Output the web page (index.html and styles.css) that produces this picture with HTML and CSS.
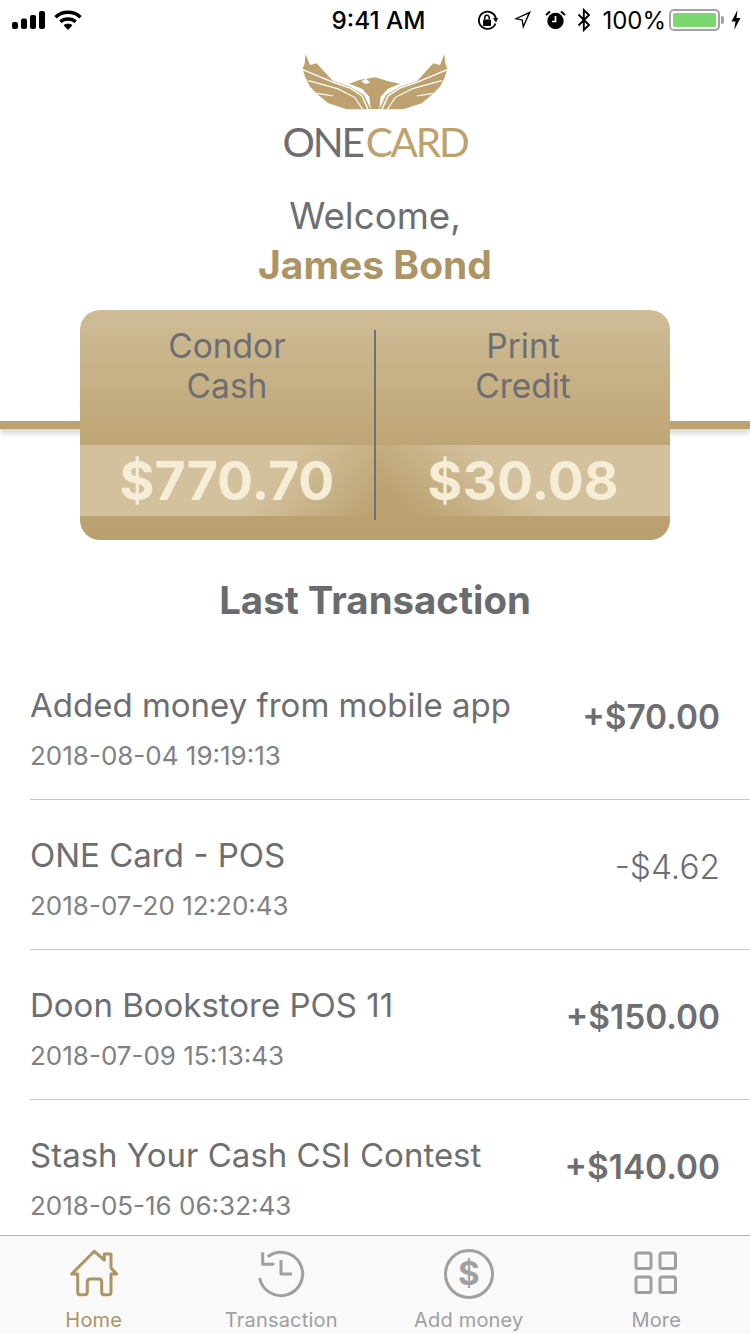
FILE: index.html
```html
<!DOCTYPE html>
<html lang="en">
<head>
<meta charset="utf-8">
<title>ONE Card</title>
<link rel="stylesheet" href="styles.css">
</head>
<body>
<div class="app">
  <header class="status">
    <div class="status-left">
      <svg class="i-signal" width="34" height="18" viewBox="0 0 34 18"><rect x="0" y="11" width="6" height="7" rx="2"/><rect x="9" y="7.5" width="6" height="10.5" rx="2"/><rect x="18" y="4" width="6" height="14" rx="2"/><rect x="27" y="0" width="6" height="18" rx="2"/></svg>
      <svg class="i-wifi" width="28" height="20" viewBox="0 0 28 20"><path d="M1.5 7.2 C8.5 0.6 19.5 0.6 26.5 7.2" fill="none" stroke="#000" stroke-width="3.4"/><path d="M6.3 11.8 C10.6 8 17.4 8 21.7 11.8" fill="none" stroke="#000" stroke-width="3.4"/><path d="M14 20 L9.6 15.2 C12 13.4 16 13.4 18.4 15.2 Z"/></svg>
    </div>
    <div class="time">9:41 AM</div>
    <div class="status-right">
      <svg class="gap-lock" width="21" height="21" viewBox="0 0 21 21"><path d="M18.5 13.5 A8.6 8.6 0 1 1 19 9" fill="none" stroke="#000" stroke-width="1.8"/><path d="M16 8 L21 8 L19 12.5 Z"/><rect x="6" y="9.5" width="8" height="6.5" rx="1"/><path d="M7.8 9.5 V7.5 a2.2 2.2 0 0 1 4.4 0 V9.5" fill="none" stroke="#000" stroke-width="1.5"/></svg>
      <svg class="gap-arrow" width="19" height="20" viewBox="0 0 19 20"><path d="M18 1 L10 19 L8.6 10.4 L1 9 Z M15 4 L4.8 8.6 L9.8 9.4 L10.6 14.6 Z" fill-rule="evenodd"/></svg>
      <svg width="21" height="20" viewBox="0 0 21 20"><circle cx="10.5" cy="11" r="8.2"/><path d="M10.5 6 V11.5 H7" fill="none" stroke="#fff" stroke-width="1.7"/><path d="M1 5 L5 1.4 M20 5 L16 1.4" stroke="#000" stroke-width="2"/></svg>
      <svg width="14" height="24" viewBox="0 0 14 24"><path d="M1.5 6.5 L12 17 L6.8 22 V2 L12 7 L1.5 17.5" fill="none" stroke="#000" stroke-width="1.9"/></svg>
      <span class="pct">100%</span>
      <div class="battery"><div class="battery-fill"></div></div>
      <svg width="10" height="20" viewBox="0 0 10 20"><path d="M6.5 0 L0.5 11.5 H4.5 L3.2 20 L9.5 8 H5.5 Z"/></svg>
    </div>
  </header>

  <main class="main">
    <div class="logo">
      <svg class="eagle" width="150" height="58" viewBox="120 42 450 174">
        <g class="wing">
          <path d="M137 43 L150 75 L170 70 L218 122 L270 140 L312 165 L332 208 L260 208 L205 190 L175 165 L150 140 L135 110 L128 86 L134 70 Z"/>
          <path class="cut" d="M128 89 L220 127 L272 145 L306 168 L324 208"/>
          <path class="cut thin" d="M145 122 L232 146 L284 172 L308 208"/>
          <path class="cut thin" d="M172 160 L220 168"/>
        </g>
        <g class="wing" transform="matrix(-1 0 0 1 690 0)">
          <path d="M137 43 L150 75 L170 70 L218 122 L270 140 L312 165 L332 208 L260 208 L205 190 L175 165 L150 140 L135 110 L128 86 L134 70 Z"/>
          <path class="cut" d="M128 89 L220 127 L272 145 L306 168 L324 208"/>
          <path class="cut thin" d="M145 122 L232 146 L284 172 L308 208"/>
          <path class="cut thin" d="M172 160 L220 168"/>
        </g>
        <path class="wing" d="M267 131 L298 120 L345 112 L385 124 L420 131 L384 146 L362 170 L358 207 L332 207 L328 170 L306 146 Z"/>
        <path d="M304 124 L318 116 L330 128 L316 132 Z" fill="#fff"/>
      </svg>
      <div class="wordmark"><span class="w-grey">ONE</span><span class="w-gold">CARD</span></div>
    </div>

    <h1 class="welcome">Welcome,</h1>
    <div class="name">James Bond</div>

    <section class="card-wrap">
      <div class="card">
        <div class="cell">
          <div class="cell-label">Condor<br>Cash</div>
          <div class="band band-left"><span class="amt">$770.70</span></div>
        </div>
        <div class="divider"></div>
        <div class="cell">
          <div class="cell-label">Print<br>Credit</div>
          <div class="band band-right"><span class="amt">$30.08</span></div>
        </div>
      </div>
    </section>

    <h2 class="last">Last Transaction</h2>

    <ul class="list">
      <li class="row">
        <div><div class="t-title">Added money from mobile app</div><div class="t-date">2018-08-04 19:19:13</div></div>
        <div class="t-amt plus">+$70.00</div>
      </li>
      <li class="row">
        <div><div class="t-title">ONE Card - POS</div><div class="t-date">2018-07-20 12:20:43</div></div>
        <div class="t-amt minus">-$4.62</div>
      </li>
      <li class="row">
        <div><div class="t-title">Doon Bookstore POS 11</div><div class="t-date">2018-07-09 15:13:43</div></div>
        <div class="t-amt plus">+$150.00</div>
      </li>
      <li class="row">
        <div><div class="t-title">Stash Your Cash CSI Contest</div><div class="t-date">2018-05-16 06:32:43</div></div>
        <div class="t-amt plus">+$140.00</div>
      </li>
    </ul>
  </main>

  <nav class="tabs">
    <div class="tab active">
      <svg width="50" height="50" viewBox="0 0 50 50"><path class="ic" d="M25.3 2.3 L35.3 11 V5 H42 V19 L47.7 25 H42 V43 Q42 45.7 39.5 45.7 H35 Q32.7 45.7 32.7 43 V33 Q32.7 30 30 30 H21 Q18.3 30 18.3 33 V43 Q18.3 45.7 16 45.7 H11 Q8.7 45.7 8.7 43 V25 H2.7 Z"/></svg>
      <span>Home</span>
    </div>
    <div class="tab">
      <svg width="50" height="50" viewBox="0 0 50 50"><path class="ic" d="M11.7 7.7 A21.7 21.7 0 1 1 3.6 29 M6.7 3.3 V15.3 H18.3 M25 11 V25 H36"/></svg>
      <span>Transaction</span>
    </div>
    <div class="tab">
      <svg width="50" height="50" viewBox="0 0 50 50"><circle class="ic" cx="25" cy="25" r="23.5"/><text class="dollar" x="25" y="36" text-anchor="middle">$</text></svg>
      <span>Add money</span>
    </div>
    <div class="tab">
      <svg width="50" height="50" viewBox="0 0 50 50"><rect class="ic" x="5" y="4" width="15" height="15.5" rx="2"/><rect class="ic" x="29" y="4" width="15.5" height="15.5" rx="2"/><rect class="ic" x="5" y="28" width="15" height="15.5" rx="2"/><rect class="ic" x="29" y="28" width="15.5" height="15.5" rx="2"/></svg>
      <span>More</span>
    </div>
  </nav>
</div>
</body>
</html>
```
FILE: styles.css
```css
* { box-sizing: border-box; }
html, body { margin: 0; padding: 0; }
body { font-family: Inter, "Liberation Sans", sans-serif; background: #fff; color: #6d6e71; }
.app { width: 750px; height: 1334px; display: flex; flex-direction: column; overflow: hidden; }

.status { height: 40px; flex: none; display: flex; align-items: center; color: #000; padding: 0 9px 0 12px; }
.status-left { display: flex; align-items: center; gap: 8px; width: 319px; }
.time { font-size: 24.3px; font-weight: 500; width: 95px; text-align: center; white-space: nowrap; }
.status-right { display: flex; align-items: center; margin-left: auto; gap: 11px; }
.gap-lock { margin-right: 4px; }
.gap-arrow { margin-right: 2px; }
.pct { font-size: 24px; }
.battery { width: 51px; height: 22px; border: 2px solid #a3a3a3; border-radius: 5px; padding: 2px; margin-left: -8px; position: relative; }
.battery::after { content: ""; position: absolute; right: -6px; top: 5px; width: 3px; height: 8px; background: #a3a3a3; border-radius: 0 2px 2px 0; }
.battery-fill { width: 100%; height: 100%; background: #7ad86f; border-radius: 2px; }

.main { flex: 1; min-height: 0; overflow: hidden; display: flex; flex-direction: column; align-items: center; }
.main > * { flex: none; }
.logo { margin-top: 14px; display: flex; flex-direction: column; align-items: center; height: 128px; }
.eagle { display: block; }
.wing { fill: #bda26f; }
.cut { fill: none; stroke: #fff; stroke-width: 4.5; }
.thin { stroke-width: 3.5; }
.wordmark { font-family: Lato, sans-serif; font-weight: 400; font-size: 40.5px; line-height: 42px; letter-spacing: -2.2px; margin-top: 9px; white-space: nowrap; }
.w-grey { color: #6d6e71; }
.w-gold { color: #bda26f; margin-left: 3px; }

.welcome { margin: 9px 0 0; font-size: 36.7px; line-height: 50px; font-weight: 400; color: #6d6e71; }
.name { font-size: 39px; line-height: 48px; font-weight: 700; color: #ad9465; }

.card-wrap { width: 100%; position: relative; margin-top: 21px; display: flex; justify-content: center; }
.card-wrap::before { content: ""; position: absolute; left: 0; right: 0; top: 111px; height: 8px; background: #bda271; box-shadow: 0 4px 6px rgba(0,0,0,.18); }
.card { position: relative; width: 590px; height: 230px; border-radius: 20px; overflow: hidden; display: flex; background: linear-gradient(#cfbc97, #bea574 60%, #baa06f); }
.cell { flex: 1; display: flex; flex-direction: column; align-items: center; }
.cell-label { height: 135px; padding-top: 16px; font-size: 33.5px; line-height: 40px; text-align: center; color: #6d6e71; }
.band { width: 100%; height: 71px; display: flex; align-items: center; justify-content: center; }
.band-left { background: linear-gradient(128deg, #d3c19e 0, #d3c19e 62%, rgba(211,193,158,0) 100%); }
.band-right { background: linear-gradient(45deg, rgba(211,193,158,0) 10%, #d3c19e 48%, #d3c19e 100%); }
.amt { font-size: 53.5px; font-weight: 700; color: #f6edd6; }
.divider { width: 2px; height: 190px; align-self: center; background: #6f7274; flex: none; }

.last { margin: 35px 0 0; font-size: 38.4px; line-height: 50px; font-weight: 700; color: #6a6b6e; }

.list { list-style: none; margin: 25px 0 0; padding: 0 0 0 30px; width: 100%; }
.row { height: 150px; display: flex; justify-content: space-between; align-items: flex-start; padding: 35px 30px 0 0; border-bottom: 1px solid #c8c8c8; }
.t-title { font-size: 33px; line-height: 40px; color: #6d6e71; font-weight: 400; white-space: nowrap; }
.t-date { font-size: 26px; line-height: 30px; margin-top: 16px; color: #808184; white-space: nowrap; }
.t-amt { font-size: 33.4px; line-height: 40px; margin-top: 12px; color: #6d6e71; white-space: nowrap; }
.plus { font-weight: 600; }
.minus { font-weight: 300; }

.tabs { flex: none; height: 99px; background: #f9f9f9; border-top: 1px solid #b2b2b2; display: grid; grid-template-columns: repeat(4, 1fr); }
.tab { display: flex; flex-direction: column; align-items: center; padding-top: 13px; font-size: 20px; letter-spacing: .2px; line-height: 26px; color: #a0a0a0; }
.tab svg { display: block; margin-bottom: 8px; }
.ic { fill: none; stroke: #a0a0a0; stroke-width: 3; stroke-linejoin: round; }
.dollar { font-size: 33px; font-weight: 700; fill: #a0a0a0; font-family: Inter, sans-serif; }
.active { color: #ad9465; }
.active .ic { stroke: #ad9465; }
```
